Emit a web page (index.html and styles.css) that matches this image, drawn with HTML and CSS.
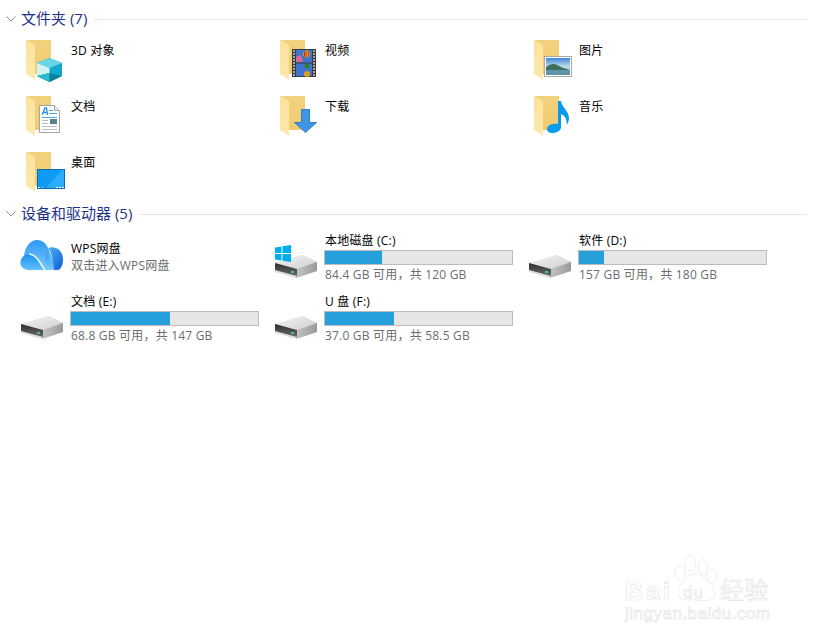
FILE: index.html
```html
<!DOCTYPE html>
<html lang="zh-CN">
  <head>
    <meta charset="UTF-8" />
    <title>此电脑</title>
    <link rel="stylesheet" href="styles.css">
  </head>

  <body>
    <svg class="defs" width="0" height="0">
      <defs>
        <linearGradient id="folder-back" x1="0" y1="0" x2="0" y2="1">
          <stop offset="0" stop-color="#f3d27f" />
          <stop offset="1" stop-color="#efc96c" />
        </linearGradient>
        <linearGradient id="folder-front" x1="0" y1="0" x2="0" y2="1">
          <stop offset="0" stop-color="#fbe39a" />
          <stop offset="1" stop-color="#fde9ae" />
        </linearGradient>
        <linearGradient id="drive-top" x1="0" y1="0" x2="1" y2="1">
          <stop offset="0" stop-color="#f4f4f4" />
          <stop offset="1" stop-color="#cfcfcf" />
        </linearGradient>
        <linearGradient id="drive-side" x1="0" y1="0" x2="1" y2="0">
          <stop offset="0" stop-color="#c4c4c4" />
          <stop offset="1" stop-color="#9a9a9a" />
        </linearGradient>
        <linearGradient id="drive-panel" x1="0" y1="0" x2="0" y2="1">
          <stop offset="0" stop-color="#2e2e2e" />
          <stop offset="1" stop-color="#6a6a6a" />
        </linearGradient>
        <linearGradient id="cloud-back" x1="0" y1="0" x2="0" y2="1">
          <stop offset="0" stop-color="#2e98f2" />
          <stop offset="1" stop-color="#7ccbfb" />
        </linearGradient>
        <linearGradient id="cloud-right" x1="0" y1="0" x2="1" y2="1">
          <stop offset="0" stop-color="#4fb0f5" />
          <stop offset="1" stop-color="#0c5ed6" />
        </linearGradient>
        <linearGradient id="cloud-front" x1="0" y1="0" x2="0" y2="1">
          <stop offset="0" stop-color="#1b8ff0" />
          <stop offset="1" stop-color="#62c2fa" />
        </linearGradient>
        <linearGradient id="photo-sky" x1="0" y1="0" x2="0" y2="1">
          <stop offset="0" stop-color="#3f86d8" />
          <stop offset="0.5" stop-color="#bcdcec" />
          <stop offset="1" stop-color="#8fb6c6" />
        </linearGradient>
        <symbol id="folder" viewBox="0 0 48 48">
          <path d="M6 3H31V37H15V43Z" fill="url(#folder-back)" />
          <path d="M6 3L15 8V43L6 37Z" fill="url(#folder-front)" />
        </symbol>
        <symbol id="drive" viewBox="0 0 48 50">
          <path d="M1 32L29 24L43 31V40L22 47L1 41Z" fill="#dedede" />
          <path d="M1 32L29 24L43 31L23 38Z" fill="url(#drive-top)" />
          <path d="M23 38L43 31V40L22 47Z" fill="url(#drive-side)" />
          <path d="M1 32L23 38V45L1 39Z" fill="url(#drive-panel)" />
          <rect x="17" y="40" width="3" height="2" fill="#3fd06a" />
        </symbol>
      </defs>
    </svg>

    <section class="group">
      <h2 class="group-head">
        <svg class="chevron" width="10" height="6" viewBox="0 0 10 6"><path d="M0.5 0.5L5 5L9.5 0.5" /></svg>
        <span class="title">文件夹 (7)</span>
        <i class="rule"></i>
      </h2>
      <div class="grid folders">
        <div class="item">
          <svg class="icon" width="48" height="48" viewBox="0 0 48 48">
            <use href="#folder" width="48" height="48" />
            <path d="M29.500 21L42 26V39L29.500 45L17 39V26Z" fill="#10a9cf" />
            <path d="M29.500 21L42 26L29.500 31L17 26Z" fill="#67d6e6" />
            <path d="M17 26L29.500 31V39L17 39Z" fill="#d3f3f5" />
            <path d="M17 39L29.500 36L42 39L29.500 45Z" fill="#0c7f9d" />
            <path d="M17 39L29.500 36V45Z" fill="#27bcd2" />
          </svg>
          <div class="name">3D 对象</div>
        </div>
        <div class="item">
          <svg class="icon" width="48" height="48" viewBox="0 0 48 48">
            <use href="#folder" width="48" height="48" />
            <rect x="18" y="12" width="24" height="28" fill="#3a3a3a" />
            <rect x="22" y="13" width="16" height="12.500" fill="#3f74d0" />
            <rect x="22" y="26.500" width="16" height="12.500" fill="#3f74d0" />
            <path d="M22 20L27 18L29 25H22Z" fill="#d8689a" />
            <circle cx="32.500" cy="17" r="3.500" fill="#e0a020" />
            <path d="M32 14V20M30.500 14.500V19.500M34.500 14.500V19.500" stroke="#b8302a" stroke-width="1" />
            <circle cx="33" cy="29" r="2.500" fill="#2f8030" />
            <circle cx="33" cy="37" r="3" fill="#e0a020" />
            <path d="M19 14H21M19 17H21M19 20H21M19 23H21M19 26H21M19 29H21M19 32H21M19 35H21M19 38H21M39 14H41M39 17H41M39 20H41M39 23H41M39 26H41M39 29H41M39 32H41M39 35H41M39 38H41" stroke="#c8c8c8" stroke-width="1.500" />
          </svg>
          <div class="name">视频</div>
        </div>
        <div class="item">
          <svg class="icon" width="48" height="48" viewBox="0 0 48 48">
            <use href="#folder" width="48" height="48" />
            <rect x="16.500" y="19.500" width="27" height="20" fill="#fff" stroke="#a9a9a9" />
            <rect x="18" y="21" width="24" height="17" fill="url(#photo-sky)" />
            <path d="M18 30Q24 25 29 28T42 33V34H18Z" fill="#3f6f5c" />
            <rect x="18" y="33" width="24" height="5" fill="#5f93a8" />
          </svg>
          <div class="name">图片</div>
        </div>
        <div class="item">
          <svg class="icon" width="48" height="48" viewBox="0 0 48 48">
            <use href="#folder" width="48" height="48" />
            <path d="M19.500 12.500H34.500L39.500 17.500V39.500H19.500Z" fill="#fff" stroke="#a3a3a3" />
            <path d="M34.500 12.500V17.500H39.500" fill="#ececec" stroke="#a3a3a3" />
            <path d="M22 22L25 15H26.500L27.500 22M23.500 19.500H27" fill="none" stroke="#2a8fdc" stroke-width="1.300" />
            <path d="M29 17.500H33M29 20.500H37M22 24.500H37" stroke="#4aa6e6" />
            <path d="M22 27.500H28M22 30.500H28M22 33.500H37M22 36.500H37" stroke="#bdbdbd" />
            <rect x="30" y="26" width="7" height="5" fill="#5d7f8c" />
          </svg>
          <div class="name">文档</div>
        </div>
        <div class="item">
          <svg class="icon" width="48" height="48" viewBox="0 0 48 48">
            <use href="#folder" width="48" height="48" />
            <path d="M27.500 16.500H35.500V29.500H42.500L31.500 39.500L20.500 29.500H27.500Z" fill="#3d97e4" stroke="#2f7fc8" />
          </svg>
          <div class="name">下载</div>
        </div>
        <div class="item">
          <svg class="icon" width="48" height="48" viewBox="0 0 48 48">
            <use href="#folder" width="48" height="48" />
            <path d="M30 8H33C33.500 14 41 18 41 25C41 28 40 30 38.500 32C39 28 38 23 33 21V34C33 38 28 40 24 40C21 40 19 38.500 19 36C19 32.500 24 30 30 31Z" fill="#0a9bf0" />
          </svg>
          <div class="name">音乐</div>
        </div>
        <div class="item">
          <svg class="icon" width="48" height="48" viewBox="0 0 48 48">
            <use href="#folder" width="48" height="48" />
            <rect x="17.500" y="20.500" width="27" height="19" fill="#0f9bf5" stroke="#0b6cb4" />
            <path d="M27 38L42 21H44V39H27Z" fill="#2cadf9" />
            <path d="M18 38.500H20M22 38.500H23M36 38.500H38M39 38.500H41M42 38.500H44" stroke="#fff" />
          </svg>
          <div class="name">桌面</div>
        </div>
      </div>
    </section>

    <section class="group">
      <h2 class="group-head">
        <svg class="chevron" width="10" height="6" viewBox="0 0 10 6"><path d="M0.5 0.5L5 5L9.5 0.5" /></svg>
        <span class="title">设备和驱动器 (5)</span>
        <i class="rule"></i>
      </h2>
      <div class="grid drives">
        <div class="item item-middle">
          <svg class="icon" width="48" height="32" viewBox="0 0 48 32">
            <path d="M4 16C5 6 11 0 17 0C22 0 26 3 28 8L37 30H9Z" fill="url(#cloud-back)" />
            <path d="M28 8C36 5 43 11 43 19C43 25 41 30 37 30H34C33 24 33 14 28 8Z" fill="url(#cloud-right)" />
            <path d="M26 12C30 17 31 25 34 30H24Z" fill="url(#cloud-back)" />
            <path d="M9 30C3 30 0 26 0.500 22C1 17 5 14 9 14C16 14 19 22 24 30Z" fill="url(#cloud-front)" />
            <path d="M9 14C16 14 20 23 25 30" fill="none" stroke="#eef8fe" stroke-width="1.600" />
          </svg>
          <div class="cloud-text">
            <div class="name">WPS网盘</div>
            <div class="sub">双击进入WPS网盘</div>
          </div>
        </div>
        <div class="item">
          <svg class="icon" width="48" height="50" viewBox="0 0 48 50">
            <use href="#drive" width="48" height="50" />
            <path d="M1 16.500L7.500 15.500V22H1ZM8.500 15.300L17 14V22H8.500ZM1 23H7.500V29.500L1 28.500ZM8.500 23H17V31L8.500 29.700Z" fill="#00aeef" />
          </svg>
          <div class="info">
            <div class="name">本地磁盘 (C:)</div>
            <div class="bar"><div class="fill" style="width: 30.500%"></div></div>
            <div class="sub">84.4 GB 可用，共 120 GB</div>
          </div>
        </div>
        <div class="item">
          <svg class="icon" width="48" height="50" viewBox="0 0 48 50">
            <use href="#drive" width="48" height="50" />
          </svg>
          <div class="info">
            <div class="name">软件 (D:)</div>
            <div class="bar"><div class="fill" style="width: 13.400%"></div></div>
            <div class="sub">157 GB 可用，共 180 GB</div>
          </div>
        </div>
        <div class="item">
          <svg class="icon" width="48" height="50" viewBox="0 0 48 50">
            <use href="#drive" width="48" height="50" />
          </svg>
          <div class="info">
            <div class="name">文档 (E:)</div>
            <div class="bar"><div class="fill" style="width: 53%"></div></div>
            <div class="sub">68.8 GB 可用，共 147 GB</div>
          </div>
        </div>
        <div class="item">
          <svg class="icon" width="48" height="50" viewBox="0 0 48 50">
            <use href="#drive" width="48" height="50" />
          </svg>
          <div class="info">
            <div class="name">U 盘 (F:)</div>
            <div class="bar"><div class="fill" style="width: 36.800%"></div></div>
            <div class="sub">37.0 GB 可用，共 58.5 GB</div>
          </div>
        </div>
      </div>
    </section>

    <svg class="watermark" width="160" height="76" viewBox="0 0 160 76">
      <g fill="#fff" stroke="#e6e6e6" stroke-width="0.700">
        <text x="3" y="49" class="wm-big">Bai</text>
        <ellipse cx="68" cy="12" rx="5.500" ry="8" />
        <ellipse cx="81" cy="16" rx="5" ry="7.500" />
        <ellipse cx="58" cy="22" rx="5" ry="7" />
        <ellipse cx="90" cy="25" rx="5" ry="7" />
        <path d="M73 23C82 23 93 36 93 43C93 50 84 50 74 49C66 48 60 51 57 45C54 37 64 23 73 23Z" />
        <text x="61" y="47" class="wm-du">du</text>
        <text x="98" y="48" class="wm-cn">经验</text>
        <text x="3" y="68" class="wm-url">jingyan.baidu.com</text>
      </g>
    </svg>
  </body>
</html>
```

FILE: styles.css
```css
* {
  box-sizing: border-box;
}

html,
body {
  height: 100%;
}

body {
  position: relative;
  margin: 0;
  padding-top: 11px;
  background: #fff;
  color: #000;
  font-family: "Open Sans", "Noto Sans CJK SC", sans-serif;
  font-size: 12px;
  letter-spacing: 0.2px;
  overflow: hidden;
}

.defs {
  position: absolute;
}

.group-head {
  display: flex;
  align-items: center;
  height: 16px;
  margin: 0 7px 10px 6px;
  color: #1e3287;
  font-size: 15px;
  font-weight: 400;
  letter-spacing: 0;
  white-space: nowrap;
}

.title {
  margin-bottom: 3px;
}

.chevron {
  flex: none;
  margin-right: 5px;
  fill: none;
  stroke: #8a8a8a;
}

.rule {
  flex: 1;
  height: 1px;
  margin-left: 7px;
  background: #e5e5e5;
}

.grid {
  display: grid;
  grid-template-columns: repeat(3, 254px);
  padding-left: 20px;
}

.folders {
  grid-auto-rows: 56px;
  margin-top: 1px;
  margin-bottom: 1px;
}

.drives {
  grid-auto-rows: 50px;
  row-gap: 11px;
  margin-top: -1px;
}

.item {
  display: flex;
  gap: 3px;
}

.item-middle {
  align-items: center;
}

.icon {
  display: block;
  flex: none;
}

.name {
  height: 17px;
  line-height: 17px;
}

.folders .name {
  margin-top: 5px;
}

.sub {
  height: 17px;
  line-height: 17px;
  color: #6d6d6d;
}

.cloud-text {
  padding-top: 2px;
}

.info {
  width: 188px;
  padding-top: 1px;
}

.bar {
  height: 15px;
  margin: 1px 0 1px -1px;
  border: 1px solid #bcbcbc;
  background: #e6e6e6;
}

.fill {
  height: 100%;
  background: #26a0da;
}

.watermark {
  position: absolute;
  left: 622px;
  top: 551px;
}

.watermark text {
  font-family: "Liberation Sans", "Noto Sans CJK SC", sans-serif;
}

.wm-big {
  font-size: 25px;
  font-weight: 700;
  letter-spacing: 3px;
}

.wm-du {
  font-size: 17px;
  letter-spacing: 1px;
}

.wm-cn {
  font-size: 24px;
}

.wm-url {
  font-size: 17px;
  letter-spacing: 0.5px;
}
```
